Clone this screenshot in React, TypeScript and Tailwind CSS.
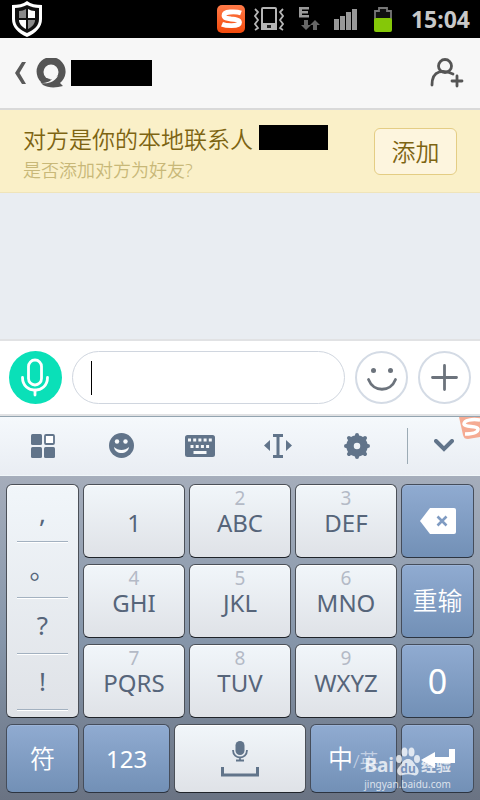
import React from 'react';

interface KeyProps {
  label: React.ReactNode;
  digit?: string;
}

const lightKey = 'rounded-md border border-[#4b5058] border-b-[#1f2329] bg-linear-to-b from-[#f1f6fa] to-[#dfe2e7] text-[#56657a] shadow-[inset_0_1px_0_#ffffff]';
const blueKey = 'flex items-center justify-center rounded-md border border-[#454d5b] border-b-[#2c3440] bg-linear-to-b from-[#90abd1] to-[#7290b6] text-white shadow-[inset_0_1px_0_#9db5d8]';

function LetterKey({ label, digit }: KeyProps) {
  return (
    <button className={`${lightKey} flex flex-col items-center pt-[3px]`}>
      <span className="h-5 text-[19px] leading-5 text-[#b4bac6]">{digit}</span>
      <span className="text-2xl leading-[30px]">{label}</span>
    </button>
  );
}

function BlueKey({ label }: KeyProps) {
  return <button className={`${blueKey} text-[25px] font-[350]`}>{label}</button>;
}

function StatusBar() {
  return (
    <div className="flex h-[38px] items-center justify-between bg-black pl-3 pr-[10px]">
      <svg width="30" height="36" viewBox="0 0 30 36">
        <path d="M15 0C11 3 6 4 0 4v14c0 8 6 14 15 18 9-4 15-10 15-18V4C24 4 19 3 15 0Z" fill="#fff" />
        <path d="M15 4C11 6 7 7 3 7v11c0 7 5 11 12 14 7-3 12-7 12-14V7c-4 0-8-1-12-3Z" fill="#111" />
        <path d="M14 8v9H7v-7c3 0 5-1 7-2Z" fill="#8b8b8b" />
        <path d="M16 8v9h7v-7c-3 0-5-1-7-2Z" fill="#fff" />
        <path d="M14 19v9c-4-2-7-5-7-9Z" fill="#fff" />
        <path d="M16 19v9c4-2 7-5 7-9Z" fill="#8b8b8b" />
      </svg>
      <div className="flex items-center">
        <svg width="28" height="28" viewBox="0 0 28 28">
          <defs>
            <linearGradient id="sogou" x1="0" y1="0" x2="0" y2="1">
              <stop offset="0" stopColor="#ff7a48" />
              <stop offset="1" stopColor="#f34a0c" />
            </linearGradient>
          </defs>
          <rect width="28" height="28" rx="5" fill="url(#sogou)" />
          <path d="M24 8C20 6.500 16 6.800 13 7c-4 .3-6 1.500-6 3.500 0 2.500 3 3 7 3.500 5 .5 8.500 1 8.500 3.500 0 2-3 3.200-8 3.200-4 0-7-.4-9.500-1.500" fill="none" stroke="#fff" strokeWidth="4.800" />
        </svg>
        <svg className="ml-[9px]" width="30" height="24" viewBox="0 0 30 24" fill="none" stroke="#b5b5b5" strokeWidth="1.800">
          <path d="M1 2l3 3-3 4 3 4-3 4 3 4-3 2M29 2l-3 3 3 4-3 4 3 4-3 4 3 2" />
          <rect x="8" y="1" width="14" height="21" rx="1" strokeWidth="2" />
          <path d="M7 16h16v7H7Z" fill="#b5b5b5" stroke="none" />
          <path d="M13 18h4v3h-4Z" fill="#222" stroke="none" />
        </svg>
        <svg className="ml-[14px]" width="22" height="24" viewBox="0 0 22 24">
          <path d="M1 0h10v2.500H4V4h6v2.500H4V8h7v2.500H1Z" fill="#9a9a9a" />
          <path d="M6 13h4v5h3l-5 5-5-5h3ZM15 23h4v-5h3l-5-5-5 5h3Z" fill="#666" />
        </svg>
        <svg className="ml-[14px]" width="24" height="24" viewBox="0 0 24 24" fill="#989898">
          <path d="M0 12h5v11H0ZM6 9h5v14H6ZM12 5h5v18h-5ZM18 2h5v21h-5Z" />
        </svg>
        <svg className="ml-4" width="18" height="25" viewBox="0 0 18 25">
          <path d="M5 4V1h8v3h4v10H1V4Z" fill="#111" stroke="#777" strokeWidth="1.800" />
          <rect y="11" width="18" height="14" rx="2" fill="#85c808" />
        </svg>
        <span className="ml-[19px] text-[23px] font-bold text-[#c8c8c8]">15:04</span>
      </div>
    </div>
  );
}

function Header() {
  return (
    <header className="flex h-[72px] items-center border-b-2 border-[#d9d9d9] bg-[#f7f7f7] pl-[15px] pr-4">
      <button aria-label="返回">
        <svg width="11" height="22" viewBox="0 0 11 22">
          <path d="M7 0h4L4.500 11l6.500 11H7L0 11Z" fill="#5a5a5a" />
        </svg>
      </button>
      <svg className="ml-[10px]" width="30" height="30" viewBox="0 0 30 30">
        <path d="M5 24A14.500 14.500 0 1 1 24 25l3 3c-7 2-15 2-20-1-1-1-2-2-2-3Z" fill="#555" />
        <circle cx="15" cy="14" r="7.500" fill="#f7f7f7" />
        <path d="M4 24c4 0 5-1 6-4l4 1c-1 3-3 4-6 4Z" fill="#555" />
        <path d="M5 25c8 1 13-1 17-7l-5 2c-2 3-6 5-12 5Z" fill="#f7f7f7" />
      </svg>
      <div className="ml-[5px] h-[26px] w-[81px] bg-black" />
      <button className="ml-auto" aria-label="添加好友">
        <svg width="34" height="30" viewBox="0 0 34 30" fill="none" stroke="#555" strokeWidth="2.800" strokeLinecap="round">
          <circle cx="15" cy="8" r="6.500" />
          <path d="M2 27c0-16 12-15 21-11M27 18v10M22 23h10" />
        </svg>
      </button>
    </header>
  );
}

function ContactBanner() {
  return (
    <section className="flex items-center border-b border-[#efe4ba] bg-[#faf0c8] px-[23px] pt-[11px] pb-[10px] font-[350]">
      <div className="pt-[3px]">
        <div className="flex items-center">
          <h1 className="text-[23px] leading-[30px] text-[#7d6412]">对方是你的本地联系人</h1>
          <div className="mb-1 ml-[6px] h-[25px] w-[69px] bg-black" />
        </div>
        <p className="mt-1 text-lg leading-6 text-[#c8b878]">是否添加对方为好友?</p>
      </div>
      <button className="ml-auto h-[47px] w-[83px] rounded-md border border-[#e4cd84] bg-[#fdf5de] text-2xl text-[#7d6412]">
        添加
      </button>
    </section>
  );
}

function InputBar() {
  return (
    <div className="flex items-center gap-[10px] border-y-2 border-[#e1e2e4] bg-white px-[9px] py-[10px]">
      <button aria-label="语音">
        <svg width="53" height="53" viewBox="0 0 53 53" fill="none" stroke="#fff" strokeWidth="2.800" strokeLinecap="round">
          <circle cx="26.500" cy="26.500" r="26.500" fill="#0ae0b8" stroke="none" />
          <rect x="19.500" y="9" width="13" height="25" rx="6.500" />
          <path d="M13.500 26.500c0 17 25 17 25 0M26 39v5" />
        </svg>
      </button>
      <div className="flex h-[53px] min-w-0 flex-1 items-center rounded-full border border-[#d0d6df] px-[18px]">
        <span className="h-[34px] w-px bg-black" />
        <input className="min-w-0 flex-1 bg-transparent text-xl outline-none" aria-label="消息" />
      </div>
      <button aria-label="表情">
        <svg width="53" height="53" viewBox="0 0 53 53" fill="none" stroke="#6c737c">
          <circle cx="26.500" cy="26.500" r="25.500" stroke="#d4dbe5" strokeWidth="2" />
          <circle cx="18.500" cy="19.500" r="2.500" fill="#6c737c" stroke="none" />
          <circle cx="35.500" cy="19.500" r="2.500" fill="#6c737c" stroke="none" />
          <path d="M13.500 28.500c5 13 22 13 27 0" strokeWidth="2.800" strokeLinecap="round" />
        </svg>
      </button>
      <button aria-label="更多">
        <svg width="53" height="53" viewBox="0 0 53 53" fill="none" stroke="#6c737c" strokeWidth="2.800" strokeLinecap="round">
          <circle cx="26.500" cy="26.500" r="25.500" stroke="#d4dbe5" strokeWidth="2" />
          <path d="M26.500 14.500v24M14.500 26.500h24" />
        </svg>
      </button>
    </div>
  );
}

function KeyboardToolbar() {
  return (
    <div className="relative flex h-[60px] items-center overflow-hidden border-t border-b border-t-[#93a4b0] border-b-[#f0f6f9] bg-linear-to-b from-[#f5f9fc] to-[#e9edf3] pb-px pl-1 text-[#61748a]">
      <div className="grid flex-1 grid-cols-5 items-center justify-items-center pr-[11px]">
        <button aria-label="工具">
          <svg width="24" height="24" viewBox="0 0 24 24" fill="currentColor">
            <rect width="11" height="11" rx="1.500" />
            <rect y="13" width="11" height="11" rx="1.500" />
            <rect x="13" y="13" width="11" height="11" rx="1.500" />
            <rect x="14" y="1" width="9" height="9" rx="1" fill="#fff" stroke="currentColor" strokeWidth="1.800" />
          </svg>
        </button>
        <button aria-label="表情键盘">
          <svg width="25" height="25" viewBox="0 0 25 25" fill="#f8fafc">
            <circle cx="12.500" cy="12.500" r="12.500" fill="currentColor" />
            <circle cx="8" cy="8.500" r="2.200" />
            <circle cx="16.500" cy="8.500" r="2.200" />
            <path d="M5 14c4 4 11 4 15 0-1 8-14 8-15 0Z" />
          </svg>
        </button>
        <button aria-label="键盘">
          <svg width="30" height="22" viewBox="0 0 30 22">
            <rect width="30" height="22" rx="2.500" fill="currentColor" />
            <path d="M3 5h24M5.500 11.500h20" stroke="#f5f8fa" strokeWidth="3" strokeDasharray="3 2.200" />
            <path d="M8.500 17.500h13" stroke="#f5f8fa" strokeWidth="3" />
          </svg>
        </button>
        <button aria-label="光标">
          <svg width="28" height="26" viewBox="0 0 28 26" fill="currentColor">
            <path d="M0 12.500 6 7v11ZM28 12.500 22 7v11ZM9 1h10v3h-3.500v18H19v3H9v-3h3.500V4H9Z" />
          </svg>
        </button>
        <button aria-label="设置">
          <svg width="26" height="26" viewBox="0 0 26 26" fill="none" stroke="currentColor">
            <circle cx="13" cy="13" r="7" strokeWidth="7.500" />
            <path d="M13 2v3M13 21v3M2 13h3M21 13h3M5 5l2 2M19 19l2 2M5 21l2-2M19 7l2-2" strokeWidth="4" strokeLinecap="round" />
          </svg>
        </button>
      </div>
      <div className="h-9 w-px bg-[#9cabb5]" />
      <button className="flex w-[72px] justify-center" aria-label="收起">
        <svg width="20" height="13" viewBox="0 0 20 13" fill="none" stroke="currentColor" strokeWidth="4" strokeLinecap="round">
          <path d="m2 2 8 8 8-8" />
        </svg>
      </button>
      <svg className="absolute right-0 top-0" width="21" height="22" viewBox="0 0 21 22">
        <path d="M0 0h21v20L9 22c-3 0-4-1-5-4Z" fill="#f5ab93" />
        <path d="M21 3C13 2 5 3 5 7c1 4 13 1 14 5 0 4-7 5-13 5" fill="none" stroke="#fff" strokeWidth="3.500" />
      </svg>
    </div>
  );
}

function Watermark() {
  return (
    <div className="pointer-events-none absolute bottom-[9px] right-[29px] flex flex-col text-white/75">
      <div className="flex items-end">
        <span className="text-[19px] leading-6 font-bold">Bai</span>
        <svg width="27" height="30" viewBox="0 0 27 30" fill="#fff" fillOpacity="0.75">
          <ellipse cx="5" cy="12" rx="3" ry="4" />
          <ellipse cx="10.500" cy="5" rx="3" ry="4.500" />
          <ellipse cx="17.500" cy="5" rx="3" ry="4.500" />
          <ellipse cx="23" cy="12" rx="3" ry="4" />
          <path d="M14 12c5 0 6 5 9 8 4 5 0 10-4 8-3-1-7-1-10 0-5 2-8-4-4-8 3-3 4-8 9-8Z" />
          <text x="14" y="26" textAnchor="middle" fontSize="12" fontWeight="700" fill="#7893bb" fillOpacity="1">du</text>
        </svg>
        <span className="text-[15px] leading-6 font-bold">经验</span>
      </div>
      <span className="text-[10px] leading-[14px]">jingyan.baidu.com</span>
    </div>
  );
}

function Keyboard() {
  return (
    <div className="relative flex flex-col gap-[6px] bg-linear-to-b from-[#a5adbb] via-[#8696aa] to-[#6a7383] px-[6px] pt-2 pb-[7px]">
      <div className="grid auto-rows-[74px] grid-cols-[73px_1fr_1fr_1fr_73px] gap-x-1 gap-y-[6px]">
        <div className={`${lightKey} row-span-3 flex flex-col px-[10px] pt-px`}>
          {[',', '。', '?', '!'].map((mark) => (
            <button key={mark} className="h-14 border-b border-[#a3b1c0] text-[26px] leading-[55px] shadow-[0_1px_0_#ffffff]">
              {mark}
            </button>
          ))}
        </div>
        <LetterKey label="1" />
        <LetterKey digit="2" label="ABC" />
        <LetterKey digit="3" label="DEF" />
        <button className={blueKey} aria-label="删除">
          <svg width="36" height="26" viewBox="0 0 36 26">
            <path d="M10 0h24q2 0 2 2v22q0 2-2 2H10L0 13Z" fill="#fff" />
            <path d="m17.500 8.500 9 9m0-9-9 9" stroke="#7f9bc2" strokeWidth="2.600" />
          </svg>
        </button>
        <LetterKey digit="4" label="GHI" />
        <LetterKey digit="5" label="JKL" />
        <LetterKey digit="6" label="MNO" />
        <BlueKey label="重输" />
        <LetterKey digit="7" label="PQRS" />
        <LetterKey digit="8" label="TUV" />
        <LetterKey digit="9" label="WXYZ" />
        <button className={`${blueKey} text-[34px]`}>0</button>
      </div>
      <div className="grid h-[69px] grid-cols-[73px_2fr_3fr_2fr_73px] gap-x-1">
        <BlueKey label="符" />
        <BlueKey label={<span className="text-2xl font-normal">123</span>} />
        <button className={`${lightKey} flex items-center justify-center`} aria-label="空格">
          <svg width="38" height="36" viewBox="0 0 38 36" fill="none" stroke="#61748a">
            <rect x="14.500" y="0" width="9" height="14" rx="4.500" fill="#61748a" stroke="none" />
            <path d="M12 9c0 10 14 10 14 0M19 16v4M15 19.500h8" strokeWidth="1.800" />
            <path d="M1.500 26v8h35v-8" strokeWidth="3" />
          </svg>
        </button>
        <BlueKey
          label={
            <span>
              中<span className="text-[19px] text-[#c3d0e4]">/英</span>
            </span>
          }
        />
        <button className={blueKey} aria-label="回车">
          <svg width="34" height="20" viewBox="0 0 34 20" fill="#fff">
            <path d="M28 0h6v14H14v5L0 11l14-8v5h14Z" />
          </svg>
        </button>
      </div>
      <Watermark />
    </div>
  );
}

export default function App() {
  return (
    <div className="flex min-h-screen flex-col bg-[#e9edf2] font-['Noto_Sans','Noto_Sans_CJK_SC',sans-serif]">
      <StatusBar />
      <Header />
      <ContactBanner />
      <main className="flex-1" />
      <InputBar />
      <KeyboardToolbar />
      <Keyboard />
    </div>
  );
}
